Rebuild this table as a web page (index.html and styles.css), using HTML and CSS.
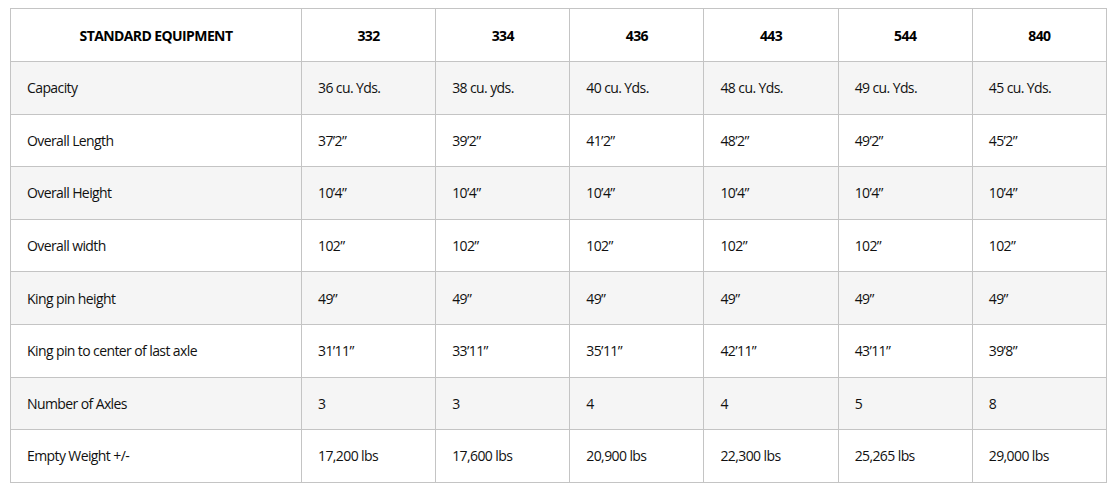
FILE: index.html
```html
<!DOCTYPE html>
<html>
<head>
<meta charset="utf-8">
<link rel="stylesheet" href="styles.css">
</head>
<body>
<div class="wrap">
<table class="spec">
<colgroup><col class="c-first"><col><col><col><col><col><col></colgroup>
<thead>
<tr><th>STANDARD EQUIPMENT</th><th>332</th><th>334</th><th>436</th><th>443</th><th>544</th><th>840</th></tr>
</thead>
<tbody>
<tr><td>Capacity</td><td>36 cu. Yds.</td><td>38 cu. yds.</td><td>40 cu. Yds.</td><td>48 cu. Yds.</td><td>49 cu. Yds.</td><td>45 cu. Yds.</td></tr>
<tr><td>Overall Length</td><td>37’2”</td><td>39’2”</td><td>41’2”</td><td>48’2”</td><td>49’2”</td><td>45’2”</td></tr>
<tr><td>Overall Height</td><td>10’4”</td><td>10’4”</td><td>10’4”</td><td>10’4”</td><td>10’4”</td><td>10’4”</td></tr>
<tr><td>Overall width</td><td>102”</td><td>102”</td><td>102”</td><td>102”</td><td>102”</td><td>102”</td></tr>
<tr><td>King pin height</td><td>49”</td><td>49”</td><td>49”</td><td>49”</td><td>49”</td><td>49”</td></tr>
<tr><td>King pin to center of last axle</td><td>31’11”</td><td>33’11”</td><td>35’11”</td><td>42’11”</td><td>43’11”</td><td>39’8”</td></tr>
<tr><td>Number of Axles</td><td>3</td><td>3</td><td>4</td><td>4</td><td>5</td><td>8</td></tr>
<tr><td>Empty Weight +/-</td><td>17,200 lbs</td><td>17,600 lbs</td><td>20,900 lbs</td><td>22,300 lbs</td><td>25,265 lbs</td><td>29,000 lbs</td></tr>
</tbody>
</table>
</div>
</body>
</html>
```
FILE: styles.css
```css
html, body {
  margin: 0;
  padding: 0;
  background: #fff;
}
.wrap {
  padding: 8px 10px 0 10px;
}
.spec {
  width: 1097px;
  border-collapse: collapse;
  table-layout: fixed;
  font-family: "Open Sans", sans-serif;
  font-size: 14px;
  letter-spacing: -0.6px;
  color: #111;
}
.c-first {
  width: 291px;
}
.spec th, .spec td {
  border: 1px solid #c4c4c4;
  height: 52.6px;
  padding: 0 16px;
  box-sizing: border-box;
  vertical-align: middle;
}
.spec th {
  font-weight: 700;
  text-align: center;
  color: #000;
  height: 53px;
}
.spec td {
  text-align: left;
}
.spec tbody tr:nth-child(odd) td {
  background: #f5f5f5;
}
```
